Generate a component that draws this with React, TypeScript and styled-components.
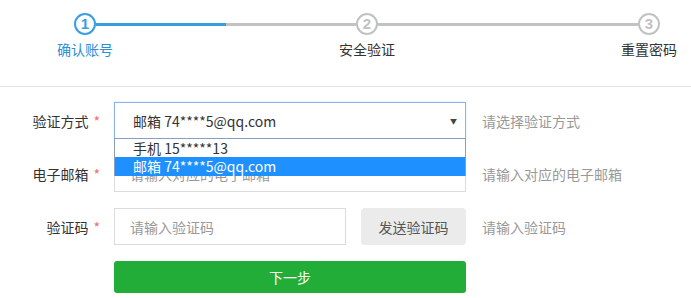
import styled, { createGlobalStyle } from "styled-components";

const GlobalStyle = createGlobalStyle`
  html, body {
    margin: 0;
    padding: 0;
    background: #fff;
  }
  body {
    font-family: "Microsoft YaHei", "Noto Sans CJK SC", "Noto Sans", sans-serif;
    font-size: 14px;
    color: #333;
  }
`;

const Header = styled.div`
  height: 87px;
  border-bottom: 1px solid #e2e2e2;
  box-sizing: border-box;
  padding: 13px 0 0 74px;
`;

const StepRow = styled.div`
  display: flex;
  align-items: flex-start;
  width: 586px;
`;

const Step = styled.div`
  width: 22px;
  display: flex;
  flex-direction: column;
  align-items: center;
`;

const Circle = styled.div<{ $active?: boolean }>`
  width: 22px;
  height: 22px;
  box-sizing: border-box;
  border-radius: 50%;
  border: 2px solid ${(p) => (p.$active ? "#3a9de0" : "#c2c2c2")};
  color: ${(p) => (p.$active ? "#3a9de0" : "#c2c2c2")};
  font-family: "Liberation Sans", Arial, sans-serif;
  font-weight: bold;
  font-size: 15px;
  line-height: 18px;
  text-align: center;
`;

const StepLabel = styled.div<{ $active?: boolean }>`
  margin-top: 4px;
  line-height: 20px;
  white-space: nowrap;
  color: ${(p) => (p.$active ? "#2b8ed6" : "#333")};
`;

const Track = styled.div<{ $progress: number }>`
  flex: 1;
  height: 3px;
  margin-top: 10px;
  background: linear-gradient(
    90deg,
    #3a9de0 0,
    #3a9de0 ${(p) => p.$progress}%,
    #c2c2c2 ${(p) => p.$progress}%,
    #c2c2c2 100%
  );
`;

const Form = styled.div`
  padding-top: 15px;
`;

const Row = styled.div`
  display: flex;
  align-items: center;
  margin-bottom: 16px;
  position: relative;
`;

const Label = styled.div`
  width: 100px;
  margin-right: 14px;
  text-align: right;
  color: #333;
  white-space: nowrap;
`;

const Star = styled.span`
  color: #f56c6c;
  margin-left: 5px;
`;

const Field = styled.div<{ $width: number }>`
  width: ${(p) => p.$width}px;
  height: 37px;
  box-sizing: border-box;
  border: 1px solid #dcdcdc;
  display: flex;
  align-items: center;
  padding-left: 15px;
`;

const Select = styled(Field)`
  border-color: #8cb2ee;
  box-shadow: 0 0 1px #a9c6f5;
  padding: 0 8px 0 18px;
  justify-content: space-between;
  color: #333;
`;

const Arrow = styled.span`
  font-size: 7px;
  color: #444;
`;

const Placeholder = styled.span`
  color: #999;
`;

const Hint = styled.div`
  margin-left: 16px;
  color: #999;
`;

const SendButton = styled.div`
  margin-left: 15px;
  width: 105px;
  height: 37px;
  border-radius: 4px;
  background: #ebebeb;
  color: #555;
  display: flex;
  align-items: center;
  justify-content: center;
`;

const NextButton = styled.div`
  margin-left: 114px;
  width: 352px;
  height: 32px;
  border-radius: 3px;
  background: #22ad38;
  color: #fff;
  display: flex;
  align-items: center;
  justify-content: center;
`;

const Dropdown = styled.div`
  position: absolute;
  left: 114px;
  top: 36px;
  width: 352px;
  box-sizing: border-box;
  border: 1px solid #8a9fc0;
  border-bottom: none;
  background: #fff;
  z-index: 2;
`;

const Option = styled.div<{ $selected?: boolean; $h: number }>`
  height: ${(p) => p.$h}px;
  line-height: ${(p) => p.$h}px;
  padding-left: 18px;
  background: ${(p) => (p.$selected ? "#1e90ff" : "#fff")};
  color: ${(p) => (p.$selected ? "#fff" : "#333")};
`;

const steps = [
  { n: 1, label: "确认账号" },
  { n: 2, label: "安全验证" },
  { n: 3, label: "重置密码" },
];

export default function App() {
  return (
    <>
      <GlobalStyle />
      <Header>
        <StepRow>
          {steps.map((s, i) => (
            <>
              {i > 0 && <Track key={"t" + i} $progress={i === 1 ? 50 : 0} />}
              <Step key={s.n}>
                <Circle $active={s.n === 1}>{s.n}</Circle>
                <StepLabel $active={s.n === 1}>{s.label}</StepLabel>
              </Step>
            </>
          ))}
        </StepRow>
      </Header>
      <Form>
        <Row>
          <Label>
            验证方式<Star>*</Star>
          </Label>
          <Select $width={352}>
            <span>邮箱 74****5@qq.com</span>
            <Arrow>▼</Arrow>
          </Select>
          <Hint>请选择验证方式</Hint>
          <Dropdown>
            <Option $h={18}>手机 15*****13</Option>
            <Option $h={19} $selected>
              邮箱 74****5@qq.com
            </Option>
          </Dropdown>
        </Row>
        <Row>
          <Label>
            电子邮箱<Star>*</Star>
          </Label>
          <Field $width={352}>
            <Placeholder>请输入对应的电子邮箱</Placeholder>
          </Field>
          <Hint>请输入对应的电子邮箱</Hint>
        </Row>
        <Row>
          <Label>
            验证码<Star>*</Star>
          </Label>
          <Field $width={232}>
            <Placeholder>请输入验证码</Placeholder>
          </Field>
          <SendButton>发送验证码</SendButton>
          <Hint>请输入验证码</Hint>
        </Row>
        <NextButton>下一步</NextButton>
      </Form>
    </>
  );
}
